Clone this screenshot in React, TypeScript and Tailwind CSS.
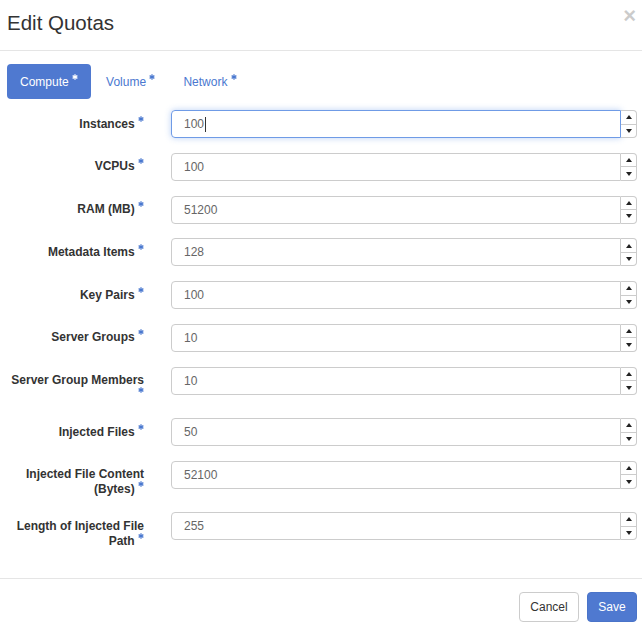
import React from 'react'

const rows = [
    { label: 'Instances', value: '100', focused: true },
    { label: 'VCPUs', value: '100' },
    { label: 'RAM (MB)', value: '51200' },
    { label: 'Metadata Items', value: '128' },
    { label: 'Key Pairs', value: '100' },
    { label: 'Server Groups', value: '10' },
    { label: 'Server Group Members', value: '10' },
    { label: 'Injected Files', value: '50' },
    { label: 'Injected File Content (Bytes)', value: '52100' },
    { label: 'Length of Injected File Path', value: '255' },
]

function Req({ white }: { white?: boolean }) {
    return (
        <svg
            viewBox="0 0 24 24"
            className={`inline-block w-[6px] h-[6px] align-top relative -top-[1px] ${white ? 'text-white' : 'text-[#4a78cf]'}`}
            fill="none"
            stroke="currentColor"
            strokeWidth={5}
        >
            <path d="M12 1v22" />
            <path d="M21.5 6.5 2.5 17.5" />
            <path d="M2.5 6.5l19 11" />
        </svg>
    )
}

function Spinner() {
    return (
        <div className="flex flex-col w-[16px] h-[28px] border-y border-r border-[#ccc] rounded-r-[4px] bg-white">
            <div className="flex-1 flex items-center justify-center border-b border-[#ccc]">
                <div className="w-0 h-0 border-x-[3.5px] border-x-transparent border-b-[4px] border-b-[#222]" />
            </div>
            <div className="flex-1 flex items-center justify-center">
                <div className="w-0 h-0 border-x-[3.5px] border-x-transparent border-t-[4px] border-t-[#222]" />
            </div>
        </div>
    )
}

function Tab({ label, active }: { label: string; active?: boolean }) {
    return (
        <div
            className={`h-[35px] px-[13px] pt-[2px] flex items-center rounded-[4px] ${
                active ? 'bg-[#4f79d0] text-white' : 'ml-[2px] text-[#4a78cf]'
            }`}
        >
            <span className="leading-[15px]">
                {label} <Req white={active} />
            </span>
        </div>
    )
}

export default function App() {
    return (
        <div className="w-[642px] h-[628px] bg-white text-[#333] font-['Liberation_Sans',Arial,sans-serif] overflow-hidden">
            {/* Header */}
            <div className="h-[51px] border-b border-[#e5e5e5] flex items-start justify-between pl-[7px] pr-[6px]">
                <h4 className="pt-[12px] text-[20.5px] leading-[1.1] text-[#333]">Edit Quotas</h4>
                <span className="pt-[5px] text-[22px] font-bold leading-none text-black opacity-20">×</span>
            </div>

            {/* Tabs */}
            <div className="flex mt-[13px] pl-[7px] text-[12px]">
                <Tab label="Compute" active />
                <Tab label="Volume" />
                <Tab label="Network" />
            </div>

            {/* Form */}
            <div className="mt-[11px] mb-[29px] flex flex-col gap-[14.8px]">
                {rows.map((r) => (
                    <div key={r.label} className="flex items-start">
                        <label className="w-[144px] pl-[7px] pt-[6.5px] text-right text-[12px] leading-[15px] font-bold text-[#333]">
                            {r.label} <Req />
                        </label>
                        <div className="ml-[27px] mr-[5px] flex flex-1">
                            <div
                                className={`flex-1 h-[28px] flex items-center pl-[12px] text-[12px] text-[#666] rounded-l-[4px] border ${
                                    r.focused
                                        ? 'border-[#6f9be6] shadow-[0_0_6px_rgba(102,150,233,0.45)]'
                                        : 'border-[#ccc]'
                                }`}
                            >
                                {r.value}
                                {r.focused && <span className="ml-[1px] w-px h-[15px] bg-[#333]" />}
                            </div>
                            <Spinner />
                        </div>
                    </div>
                ))}
            </div>

            {/* Footer */}
            <div className="border-t border-[#e5e5e5] pt-[13px] pr-[5px] flex justify-end gap-[8px] text-[12px]">
                <button className="w-[60px] h-[30px] rounded-[4px] border border-[#ccc] bg-white text-[#333]">Cancel</button>
                <button className="w-[50px] h-[30px] rounded-[4px] border border-[#4a74c9] bg-[#4f79d0] text-white">Save</button>
            </div>
        </div>
    )
}
